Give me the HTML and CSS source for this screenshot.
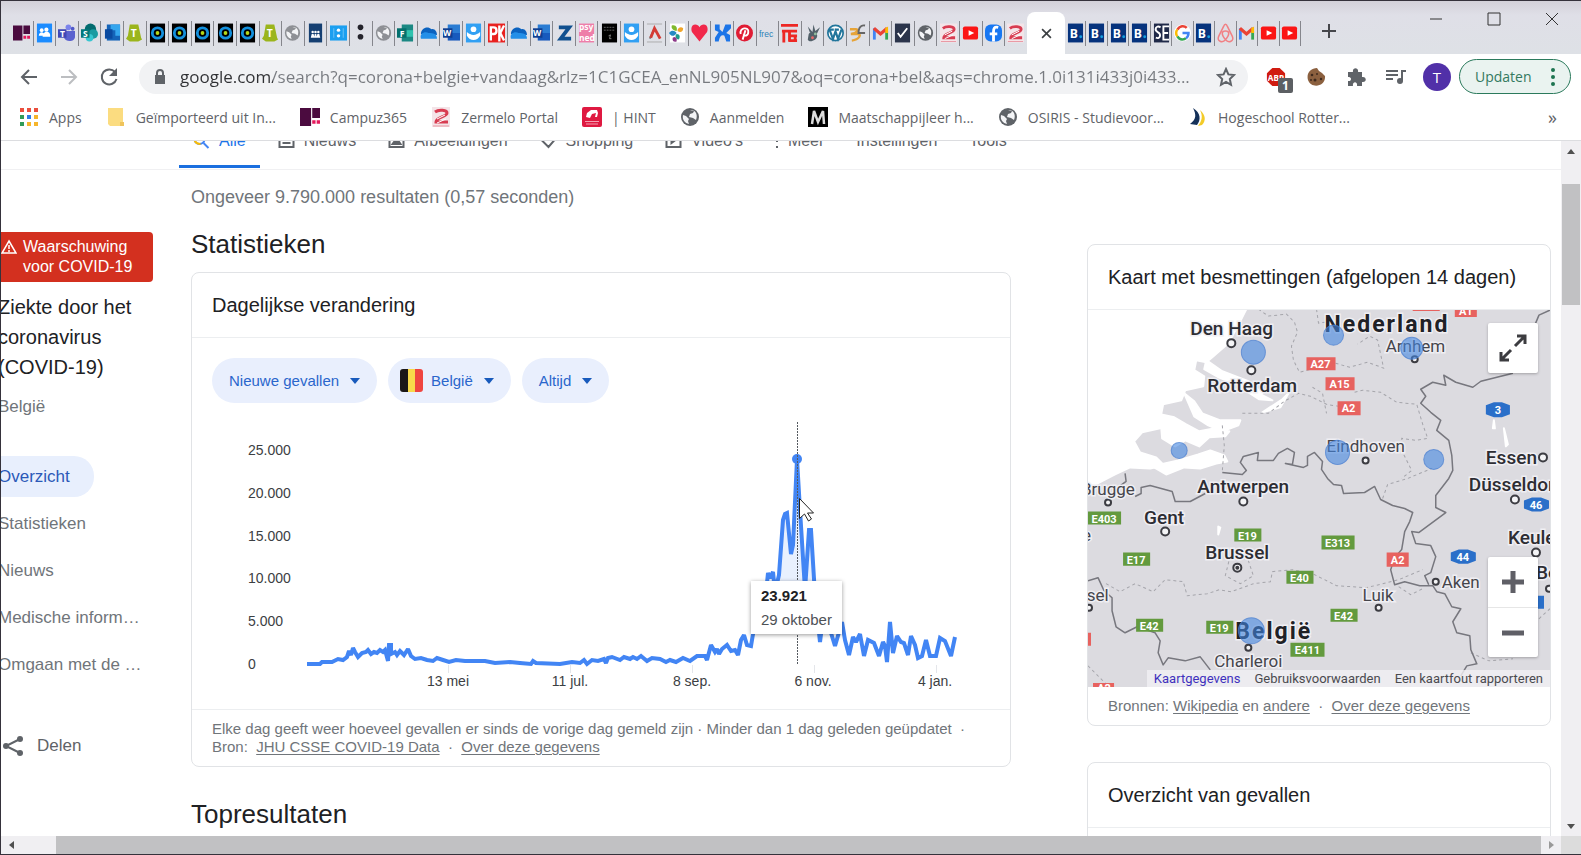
FILE: index.html
```html
<!DOCTYPE html>
<html lang="nl">
<head>
<meta charset="utf-8">
<title>corona belgie vandaag - Google Zoeken</title>
<link rel="stylesheet" href="styles.css">
</head>
<body>
<svg class="sprite" aria-hidden="true">
  <symbol id="campuz" viewBox="0 0 18 20"><path fill="#4b0b3f" d="M0 2h10v16H0zM11 2h7v9h-7z"/><path fill="#e5185c" d="M11 13h3v3h-3zM15 13h3v3h-3z"/></symbol>
  <symbol id="people" viewBox="0 0 18 20"><path fill="#1b8cff" d="M1 0h16v20H1z"/><g fill="#fff"><circle cx="6" cy="7" r="2"/><circle cx="11" cy="6.500" r="2.200"/><path d="M3 13c0-5 6-5 6 0zM7 14c0-7 9-7 8 0z"/></g></symbol>
  <symbol id="teams" viewBox="0 0 18 20"><circle cx="11" cy="4" r="3" fill="#7b83eb"/><circle cx="15.500" cy="5.500" r="2" fill="#5059c9"/><path fill="#5b62cf" d="M6 8h12v6c0 6-11 6-12 0z"/><path fill="#4048b5" d="M0 6h9v9H0z"/><text x="2" y="14" class="glyph g9">T</text></symbol>
  <symbol id="sharep" viewBox="0 0 18 20"><circle cx="10" cy="6" r="6" fill="#036c70"/><circle cx="13" cy="11" r="5" fill="#1a9ba1"/><circle cx="9" cy="15" r="4" fill="#37c6d0"/><path fill="#03787c" d="M0 6h9v9H0z"/><text x="2" y="14" class="glyph g9">S</text></symbol>
  <symbol id="cal" viewBox="0 0 18 20"><path fill="#1564b8" d="M3 1h14v17H3z"/><path fill="#35a6ee" d="M7 1h10v6H7zM12 7h5v6h-5z"/><path fill="#0a4aa0" d="M1 6h8v10H1z"/></symbol>
  <symbol id="tgreen" viewBox="0 0 18 20"><path fill="#9bb51c" d="M4 1h9l3 14 1 2-4 2H4l-4-3 2-3z"/><text x="5" y="14" class="glyph g11">T</text></symbol>
  <symbol id="ring" viewBox="0 0 18 20"><path d="M1 0h16v20H1z"/><circle cx="9" cy="10" r="5.500" fill="none" stroke="#1390dd" stroke-width="3"/><circle cx="9" cy="10" r="2" fill="#b4d819"/></symbol>
  <symbol id="globe" viewBox="0 0 20 20"><circle cx="10" cy="10" r="9" fill="currentColor"/><path fill="#f3f4f6" d="M3 8l3 1 3 3-1 2 1 3C5 16 2 13 3 8zM10 3l4 1-1 2-3 1-1 3 4 1 3 2c2-5 0-9-4-10z"/></symbol>
  <symbol id="navy" viewBox="0 0 18 20"><path fill="#153f72" d="M2 0h14v20H2z"/><g fill="#fff"><circle cx="6" cy="9" r="1.300"/><circle cx="9" cy="9" r="1.300"/><circle cx="12" cy="9" r="1.300"/><path d="M4 15l1-4h2l1 4zM7.500 15l.7-4h1.600l.7 4zM10 15l1-4h2l1 4z"/></g></symbol>
  <symbol id="cyan" viewBox="0 0 18 20"><path fill="#1b9ff0" d="M0 2h18v16H0z"/><circle cx="9" cy="7" r="1.800" fill="#fff"/><circle cx="9" cy="13" r="1.800" fill="#fff"/><path stroke="#6cc5f8" d="M4 5v10M14 5v10"/></symbol>
  <symbol id="colon" viewBox="0 0 18 20"><circle cx="9" cy="4" r="3" fill="#24232b"/><circle cx="9" cy="14" r="3" fill="#24232b"/></symbol>
  <symbol id="forms" viewBox="0 0 18 20"><path fill="#1b8883" d="M5 1h12v18H5z"/><path fill="#30c2ae" d="M10 7h7v7h-7z"/><path fill="#04706c" d="M0 5h10v10H0z"/><text x="3" y="14" class="glyph g9">F</text></symbol>
  <symbol id="cloud" viewBox="0 0 18 20"><path fill="#0b62bf" d="M1 11c0-6 7-9 11-5 4-1 6 3 6 6z"/><path fill="#238fe8" d="M1 16c-2-6 5-8 8-6 5 0 9 1 9 6z"/></symbol>
  <symbol id="word" viewBox="0 0 18 20"><path fill="#2b7cd3" d="M5 1h13v9H5z"/><path fill="#185abd" d="M5 10h13v8H5z"/><path fill="#103f91" d="M0 5h10v10H0z"/><text x="0" y="13" class="glyph g9">W</text></symbol>
  <symbol id="person" viewBox="0 0 18 20"><path fill="#31a0f3" d="M1 0h16v20H1z"/><circle cx="9" cy="6" r="3" fill="#fff"/><path fill="#fff" d="M2 9c4 4 10 4 14 0v4c-3 6-11 6-14 0z"/></symbol>
  <symbol id="ph" viewBox="0 0 18 20"><path fill="#e9211f" d="M0 0h18v20H0z"/><path fill="none" stroke="#fff" stroke-width="2.500" d="M3 18V4h3c4 0 4 7 0 7H3M12 2v17M17 2l-4 8 4 8"/></symbol>
  <symbol id="zblue" viewBox="0 0 18 20"><path fill="none" stroke="#11508f" stroke-width="4" d="M3 4h11L5 16h11"/></symbol>
  <symbol id="psy" viewBox="0 0 18 20"><path fill="#ee7fa9" d="M1 0h16v20H1z"/><text x="1" y="7" class="glyph g9">psy</text><text x="1" y="18" class="glyph g9">ned</text></symbol>
  <symbol id="blackbox" viewBox="0 0 18 20"><path d="M1 0h16v20H1z"/><path stroke="#666" stroke-dasharray="2 1" d="M3 4h12M3 7h12"/><path fill="none" stroke="#888" d="M8 13l2-1-1 4h2"/></symbol>
  <symbol id="aicon" viewBox="0 0 18 20"><path stroke="#aaa" d="M1 .5h16M1 19.500h16"/><path fill="none" stroke="#777" stroke-width="2" d="M4 16l5-11"/><path fill="none" stroke="#d43b35" stroke-width="3" d="M5 15l4-10 6 11"/></symbol>
  <symbol id="petals" viewBox="0 0 18 20"><path fill="#fff" d="M1 0h16v20H1z"/><g><path fill="#80b92d" d="M3 2c5-1 6 3 5 6-4-1-6-3-5-6z"/><path fill="#268ac4" d="M0 10c3-4 7-2 8 0-2 4-6 4-8 0z"/><path fill="#f0a52b" d="M9 8c0-4 4-5 6-3 0 4-3 5-6 3z"/><path fill="#1f9c8b" d="M8 11c4 0 4 4 2 6-3-1-4-4-2-6z"/><path fill="#8d3989" d="M4 15c3-2 5 1 4 4-3 1-5-1-4-4z"/></g></symbol>
  <symbol id="heart" viewBox="0 0 18 20"><path fill="#f1284b" d="M9 19L1 9C-2 0 7-1 9 4c2-5 11-4 8 5z"/></symbol>
  <symbol id="xblue" viewBox="0 0 18 20"><path fill="#1c75e8" d="M1 1h5v5l3 3 3-8h6v4l-5 5 4 2v7h-4l-2-6c-4-2-5 2-6 6H1v-4l4-6-4-2z"/></symbol>
  <symbol id="pin" viewBox="0 0 18 20"><circle cx="9" cy="10" r="9" fill="#e01c34"/><path fill="none" stroke="#fff" stroke-width="2" d="M7 17l3-10M5 11c-2-7 9-8 8-2 0 4-4 5-5 2"/></symbol>
  <symbol id="frec" viewBox="0 0 18 20"><text x="0" y="14" font-family="Liberation Sans" font-size="9" fill="#2b82b8">frec</text></symbol>
  <symbol id="tred" viewBox="0 0 18 20"><path fill="none" stroke="#ed2824" stroke-width="3" d="M0 2h18M1 8h16M3 8v12M8 13h9M8 18h9M9 8v11M15 13v6"/></symbol>
  <symbol id="pine" viewBox="0 0 18 20"><path fill="#53616a" d="M5 11c3-4 9-3 9 2s-9 8-10 4zM4 3l5 6 1-8 2 7 5-4-4 8-7-3z"/><circle cx="9" cy="15" r="1.500" fill="#e8696a"/><circle cx="12" cy="11" r="1.500" fill="#91bb9d"/></symbol>
  <symbol id="wp" viewBox="0 0 20 20"><circle cx="10" cy="10" r="9" fill="#fff" stroke="#21759b" stroke-width="2"/><path fill="none" stroke="#21759b" stroke-width="2.500" d="M3 6l4 11 3-9 3 9 4-11M2 6h6M9 6h5"/></symbol>
  <symbol id="swirl" viewBox="0 0 18 20"><path fill="none" stroke="#e7a437" stroke-width="2.500" d="M1 6h6c4 0 2 4-5 5h7c5 0 2 6-6 7"/><path fill="none" stroke="#666" stroke-width="2" d="M17 2c-6-1-7 5-7 8h7"/></symbol>
  <symbol id="gmail" viewBox="0 0 18 20"><path fill="#4285f4" d="M1 5h3v12H1z"/><path fill="#34a853" d="M14 8h3v9h-3z"/><path fill="none" stroke="#ea4335" stroke-width="3.500" d="M2 5l7 6 7-6"/><path fill="#fbbc04" d="M14 5l3-2v7h-3z"/></symbol>
  <symbol id="check" viewBox="0 0 18 20"><path fill="#2b344b" d="M1 0h16v20H1z"/><path fill="none" stroke="#fff" stroke-width="2" d="M4 10l3 4 7-9"/></symbol>
  <symbol id="zermelo" viewBox="0 0 18 20"><path fill="#f4e4e8" d="M0 0h18v20H0z"/><path fill="none" stroke="#d83c51" stroke-width="3" d="M3 5c4-3 12-2 12 1 0 4-11 4-11 9h12"/><path stroke="#fff" d="M5 12l8-4M5 16l9-4"/><path stroke="#e995a0" d="M1 19h16"/></symbol>
  <symbol id="yt" viewBox="0 0 18 20"><rect x="1" y="3" width="16" height="14" rx="2" fill="#fb1515"/><path fill="#fff" d="M7 7l6 3-6 3z"/></symbol>
  <symbol id="fb" viewBox="0 0 18 20"><rect y="1" width="18" height="18" rx="6" fill="#1877f2"/><path fill="none" stroke="#fff" stroke-width="3" d="M14 4c-4-1-5 1-5 5v10M5 11h8"/></symbol>
  <symbol id="booking" viewBox="0 0 18 20"><path fill="#06337d" d="M1 0h16v20H1z"/><text x="3" y="15" class="glyph g13">B</text><circle cx="14.500" cy="14" r="1.500" fill="#159fe0"/></symbol>
  <symbol id="se" viewBox="0 0 18 20"><path fill="#202a49" d="M1 0h16v20H1z"/><path fill="none" stroke="#fff" stroke-width="2" d="M8 4c-5-3-7 3-3 5s3 8-2 6M10 3h7M11 2v16M11 10h5M10 17h7"/></symbol>
  <symbol id="google" viewBox="0 0 20 20"><circle cx="10" cy="10" r="10" fill="#fff"/><g fill="none" stroke-width="3"><path stroke="#ea4335" d="M4 6c3-5 8-5 11-2"/><path stroke="#fbbc05" d="M4 6c-2 2-2 6 0 8"/><path stroke="#34a853" d="M4 14c3 5 8 4 10 2"/><path stroke="#4285f4" d="M10 10h7c0 3-1 5-3 6"/></g></symbol>
  <symbol id="airbnb" viewBox="0 0 18 20"><path fill="none" stroke="#f18084" stroke-width="1.600" d="M9 17c-3 4-10 2-7-4L7 3c1-3 3-3 4 0l5 10c3 6-4 8-7 4-5-6-4-9 0-9s5 3 0 9z"/></symbol>
  <symbol id="caret" viewBox="0 0 10 6"><path fill="#185abc" d="M0 0h10L5 6z"/></symbol>
</svg>

<header class="chrome">
  <div class="strip">
    <div class="tabs" role="tablist">
      <button class="tab"><svg><use href="#campuz"/></svg></button><button class="tab"><svg><use href="#people"/></svg></button><button class="tab"><svg><use href="#teams"/></svg></button><button class="tab"><svg><use href="#sharep"/></svg></button><button class="tab"><svg><use href="#cal"/></svg></button><button class="tab"><svg><use href="#tgreen"/></svg></button><button class="tab"><svg><use href="#ring"/></svg></button><button class="tab"><svg><use href="#ring"/></svg></button><button class="tab"><svg><use href="#ring"/></svg></button><button class="tab"><svg><use href="#ring"/></svg></button><button class="tab"><svg><use href="#ring"/></svg></button><button class="tab"><svg><use href="#tgreen"/></svg></button><button class="tab light"><svg><use href="#globe"/></svg></button><button class="tab"><svg><use href="#navy"/></svg></button><button class="tab"><svg><use href="#cyan"/></svg></button><button class="tab"><svg><use href="#colon"/></svg></button><button class="tab light"><svg><use href="#globe"/></svg></button><button class="tab"><svg><use href="#forms"/></svg></button><button class="tab"><svg><use href="#cloud"/></svg></button><button class="tab"><svg><use href="#word"/></svg></button><button class="tab"><svg><use href="#person"/></svg></button><button class="tab"><svg><use href="#ph"/></svg></button><button class="tab"><svg><use href="#cloud"/></svg></button><button class="tab"><svg><use href="#word"/></svg></button><button class="tab"><svg><use href="#zblue"/></svg></button><button class="tab"><svg><use href="#psy"/></svg></button><button class="tab"><svg><use href="#blackbox"/></svg></button><button class="tab"><svg><use href="#person"/></svg></button><button class="tab"><svg><use href="#aicon"/></svg></button><button class="tab"><svg><use href="#petals"/></svg></button><button class="tab"><svg><use href="#heart"/></svg></button><button class="tab"><svg><use href="#xblue"/></svg></button><button class="tab"><svg><use href="#pin"/></svg></button><button class="tab"><svg><use href="#frec"/></svg></button><button class="tab"><svg><use href="#tred"/></svg></button><button class="tab"><svg><use href="#pine"/></svg></button><button class="tab"><svg><use href="#wp"/></svg></button><button class="tab"><svg><use href="#swirl"/></svg></button><button class="tab"><svg><use href="#gmail"/></svg></button><button class="tab"><svg><use href="#check"/></svg></button><button class="tab"><svg><use href="#globe"/></svg></button><button class="tab"><svg><use href="#zermelo"/></svg></button><button class="tab"><svg><use href="#yt"/></svg></button><button class="tab"><svg><use href="#fb"/></svg></button><button class="tab last"><svg><use href="#zermelo"/></svg></button>
    </div>
    <button class="active-tab" aria-label="Tabblad sluiten"><svg viewBox="0 0 10 10"><path d="M1 1l8 8M9 1l-8 8"/></svg></button>
    <div class="tabs tabs-after">
      <button class="tab"><svg><use href="#booking"/></svg></button><button class="tab"><svg><use href="#booking"/></svg></button><button class="tab"><svg><use href="#booking"/></svg></button><button class="tab"><svg><use href="#booking"/></svg></button><button class="tab"><svg><use href="#se"/></svg></button><button class="tab"><svg><use href="#google"/></svg></button><button class="tab"><svg><use href="#booking"/></svg></button><button class="tab"><svg><use href="#airbnb"/></svg></button><button class="tab"><svg><use href="#gmail"/></svg></button><button class="tab"><svg><use href="#yt"/></svg></button><button class="tab"><svg><use href="#yt"/></svg></button>
    </div>
    <button class="new-tab" aria-label="Nieuw tabblad"><svg viewBox="0 0 16 16"><path d="M8 1v14M1 8h14"/></svg></button>
    <div class="window-controls">
      <button aria-label="Minimaliseren"><svg viewBox="0 0 14 14"><path d="M1 7h12"/></svg></button>
      <button aria-label="Maximaliseren"><svg viewBox="0 0 14 14"><path d="M1 1h12v12H1z"/></svg></button>
      <button aria-label="Sluiten"><svg viewBox="0 0 14 14"><path d="M1 1l12 12M13 1L1 13"/></svg></button>
    </div>
  </div>

  <div class="toolbar">
    <div class="nav-buttons">
      <button aria-label="Terug"><svg viewBox="0 0 20 20"><path d="M18 10H3M10 3l-7 7 7 7"/></svg></button>
      <button class="off" aria-label="Vooruit"><svg viewBox="0 0 20 20"><path d="M2 10h15M10 3l7 7-7 7"/></svg></button>
      <button aria-label="Vernieuwen"><svg viewBox="0 0 20 20"><path d="M16 5a7.500 7.500 0 1 0 1.500 7"/><path fill="currentColor" stroke="none" d="M18 1v8h-8z"/></svg></button>
    </div>
    <div class="omnibox">
      <svg class="lock" viewBox="0 0 12 16"><path fill="#5f6368" d="M1 6h10v9H1z"/><path fill="none" stroke="#5f6368" stroke-width="2" d="M3 7V4c0-4 6-4 6 0v3"/></svg>
      <input class="url" aria-label="Adres" value="google.com/search?q=corona+belgie+vandaag&amp;rlz=1C1GCEA_enNL905NL907&amp;oq=corona+bel&amp;aqs=chrome.1.0i131i433j0i433...">
      <button aria-label="Bladwijzer"><svg class="star" viewBox="0 0 20 20"><path d="M10 2l2.400 5.400 5.600.6-4.200 4 1.200 5.800-5-3-5 3 1.200-5.800L2 8l5.600-.6z"/></svg></button>
    </div>
    <div class="extensions">
      <button class="abp" aria-label="Adblock Plus"><svg viewBox="0 0 22 22"><path fill="#d01b10" d="M7 1h8l6 6v8l-6 6H7l-6-6V7z"/><text x="2" y="15" class="glyph g9">ABP</text></svg><span class="count">1</span></button>
      <button aria-label="Cookies"><svg viewBox="0 0 20 20"><path fill="#8b603f" d="M11 1l2 3 3 2 3 3c1 11-14 13-17 4C0 6 5 1 11 1z"/><g fill="#3f2a1e"><circle cx="6" cy="8" r="1.300"/><circle cx="11" cy="7" r="1"/><circle cx="9" cy="13" r="1.500"/><circle cx="15" cy="12" r="1.200"/><circle cx="5" cy="13" r="1"/></g></svg></button>
      <button aria-label="Extensies"><svg viewBox="0 0 20 20"><path fill="#5f6368" d="M2 5h5c-1-5 6-5 5 0h4v5c5-1 5 6 0 5v4h-5c1-5-5-5-4 0H2v-5c4 1 4-5 0-4z"/></svg></button>
      <button aria-label="Media"><svg viewBox="0 0 20 20"><path fill="none" stroke="#5f6368" stroke-width="2" d="M0 4h12M0 8h12M0 12h7M16 14V4h4"/><circle cx="14" cy="14" r="3" fill="#5f6368"/></svg></button>
      <button class="avatar">T</button>
      <button class="update">Updaten<svg viewBox="0 0 4 18"><circle cx="2" cy="2" r="2"/><circle cx="2" cy="9" r="2"/><circle cx="2" cy="16" r="2"/></svg></button>
    </div>
  </div>

  <nav class="bookmarks">
    <a href="#"><svg viewBox="0 0 20 20"><path fill="#ea4e3d" d="M1 1h4v4H1zM8 1h4v4H8zM15 1h4v4h-4z"/><path fill="#309b58" d="M1 8h4v4H1zM1 15h4v4H1z"/><path fill="#2c7be5" d="M8 8h4v4H8z"/><path fill="#f6b52b" d="M15 8h4v4h-4zM8 15h4v4H8zM15 15h4v4h-4z"/></svg>Apps</a>
    <a href="#"><svg viewBox="0 0 20 20"><path fill="#fbdc80" d="M2 1h15v14l1 1v3H4l-2-2z"/><path fill="#efc45c" d="M14 15h4v4h-4z"/></svg>Geïmporteerd uit In...</a>
    <a href="#"><svg viewBox="0 1 18 18"><use href="#campuz" width="18" height="20"/></svg>Campuz365</a>
    <a href="#"><svg viewBox="0 0 18 20"><use href="#zermelo" width="18" height="20"/></svg>Zermelo Portal</a>
    <a href="#"><svg viewBox="0 0 20 20"><rect width="20" height="20" rx="2" fill="#df1941"/><path fill="#fff" d="M4 10l1-4 4-3h6l1 3-1 4h-2l1-4-4 1-2 4z"/><path stroke="#f4a0b1" d="M3 14.500h14M4 17h12"/></svg>| HINT</a>
    <a href="#"><svg viewBox="0 0 20 20"><use href="#globe" width="20" height="20"/></svg>Aanmelden</a>
    <a href="#"><svg viewBox="0 0 20 20"><path d="M0 0h20v20H0z"/><path fill="none" stroke="#ddd" stroke-width="2.500" d="M4 17L6 4l4 11 5-11 1 13"/></svg>Maatschappijleer h...</a>
    <a href="#"><svg viewBox="0 0 20 20"><use href="#globe" width="20" height="20"/></svg>OSIRIS - Studievoor...</a>
    <a href="#"><svg viewBox="0 0 20 20"><path fill="#153159" d="M5 1c8 5 8 12 4 17l-7-1C9 12 8 7 5 1z"/><path fill="#f3cb28" d="M12 3c6 5 6 11 2 15l-4 1c4-5 5-10 2-16z"/></svg>Hogeschool Rotter...</a>
    <button class="more" aria-label="Meer bladwijzers">»</button>
  </nav>
</header>

<div class="viewport">
  <div class="page">
    <nav class="result-nav">
      <a href="#" class="current"><svg viewBox="0 0 16 16"><circle cx="6" cy="6" r="5" stroke="#4285f4"/><path stroke="#fbbc04" d="M1 7c1 3 3 4 6 4"/><path stroke="#4285f4" d="M10 10l5 5"/></svg>Alle</a>
      <a href="#"><svg viewBox="0 0 16 16"><path d="M1 2h14v12H1zM4 6h8M4 10h8"/></svg>Nieuws</a>
      <a href="#"><svg viewBox="0 0 16 16"><path d="M1 1h14v13H1z"/><path fill="currentColor" d="M4 11l3-4 2 2 1-1 2 3z"/></svg>Afbeeldingen</a>
      <a href="#"><svg viewBox="0 0 16 16"><path d="M8 1h6v6l-6 7-7-7z"/></svg>Shopping</a>
      <a href="#"><svg viewBox="0 0 16 16"><path d="M1 1h14v13H1z"/><path fill="currentColor" d="M6 5l4 2-4 3z"/></svg>Video's</a>
      <a href="#" class="more-results"><svg viewBox="0 0 4 16"><path stroke-dasharray="2 4" d="M2 1v14"/></svg>Meer</a>
      <a href="#">Instellingen</a>
      <a href="#">Tools</a>
    </nav>

    <div class="columns">
      <aside class="sidebar">
        <div class="warning"><svg viewBox="0 0 16 16"><path fill="none" stroke="#fff" stroke-width="1.500" d="M8 2l7 12H1zM8 6v4M8 11v2"/></svg><span>Waarschuwing voor COVID-19</span></div>
        <h1>Ziekte door het coronavirus (COVID-19)</h1>
        <p class="region">België</p>
        <nav class="topics">
          <a href="#" class="selected">Overzicht</a>
          <a href="#">Statistieken</a>
          <a href="#">Nieuws</a>
          <a href="#">Medische inform…</a>
          <a href="#">Omgaan met de …</a>
        </nav>
        <button class="share"><svg viewBox="0 0 20 20"><path fill="none" stroke="currentColor" stroke-width="2" d="M17 3L3 10l14 7"/><g fill="currentColor"><circle cx="17" cy="3" r="3"/><circle cx="3" cy="10" r="3"/><circle cx="17" cy="17" r="3"/></g></svg>Delen</button>
      </aside>

      <main class="main">
        <p class="stats">Ongeveer 9.790.000 resultaten (0,57 seconden)</p>
        <h2>Statistieken</h2>
        <section class="card">
          <h3>Dagelijkse verandering</h3>
          <div class="chips">
            <button class="chip">Nieuwe gevallen<svg><use href="#caret"/></svg></button>
            <button class="chip chip-flag"><span class="flag"></span>België<svg><use href="#caret"/></svg></button>
            <button class="chip">Altijd<svg><use href="#caret"/></svg></button>
          </div>
          <svg class="chart" viewBox="192 410 818 299" role="img" aria-label="Nieuwe gevallen per dag in België">
            <g class="axis">
              <text x="248" y="455">25.000</text><text x="248" y="498">20.000</text><text x="248" y="541">15.000</text><text x="248" y="583">10.000</text><text x="248" y="626">5.000</text><text x="248" y="669">0</text>
              <g text-anchor="middle"><text x="448" y="686">13 mei</text><text x="570" y="686">11 jul.</text><text x="692" y="686">8 sep.</text><text x="813" y="686">6 nov.</text><text x="935" y="686">4 jan.</text></g>
              <path stroke="#e4e6ea" d="M448.500 665v8M570.500 665v8M692.500 665v8M814.500 665v8M936.500 665v8"/>
            </g>
            <path class="area" d="M765 620V583L768 573 770 578 773 572 775 590 779 575 783 520 787 513 791 554 793 545 797 459 800 510 805 590 809 530 811 530 815 595V620z"/>
            <path class="line" d="M307 664H320L322 662H332L338 659 343 660 347 657 349 651 351 655 353 648 355 652 358 657 362 653 366 652 368 650 371 654 374 652 377 653 380 650 383 652 385 650 388 661 389 645 391 645 391 654 395 652 397 655 400 651 404 655 408 649 411 656 415 659 421 658 427 660 433 661 437 658 443 660 449 662 456 660 465 661 475 661 485 661 495 663 510 662 520 663 531 664 533 661 536 663 560 664 572 662 580 663 584 660 587 664 592 660 598 661 604 659 606 663 608 658 612 657 620 660 624 657 630 659 633 657 637 659 641 656 647 661 652 658 660 659 666 662 670 660 676 662 683 658 690 661 697 656 705 656 707 660 711 645 715 652 717 649 719 654 722 649 727 645 731 651 735 650 738 655 741 640 744 635 747 645 751 646 753 634 767 583 768 573 770 578 773 572 775 592 779 575 783 520 785 514 787 513 791 554 793 545 797 459 800 510 805 590 809 530 811 530 815 595 820 642 824 610 835 646 842 622 845 640 849 655 853 637 856 642 860 634 864 656 868 640 874 643 879 656 883 642 885 646 887 662 890 622 893 653 897 636 901 642 904 643 908 655 911 636 915 645 918 658 922 656 926 640 930 656 936 656 940 638 945 641 951 656 955 637"/>
            <circle cx="797" cy="459" r="5" fill="#4285f4"/>
            <path class="marker" d="M797.500 422V665"/>
            <rect class="tip-box" x="751" y="581" width="91" height="53"/>
            <text class="tip-value" x="761" y="601">23.921</text>
            <text class="tip-date" x="761" y="625">29 oktober</text>
            <path fill="#fff" stroke="#222" d="M799.500 498.500v20l5-4.500 4 7 3-2-4-6h6z"/>
          </svg>
          <p class="source">Elke dag geeft weer hoeveel gevallen er sinds de vorige dag gemeld zijn · Minder dan 1 dag geleden geüpdatet &nbsp;·<br>Bron: &nbsp;<a href="#">JHU CSSE COVID-19 Data</a> &nbsp;·&nbsp; <a href="#">Over deze gegevens</a></p>
        </section>
        <h2 class="top-results">Topresultaten</h2>
      </main>

      <aside class="right">
        <section class="card">
          <h3>Kaart met besmettingen (afgelopen 14 dagen)</h3>
          <div class="map">
            <svg class="map-canvas" viewBox="1088 309 461 378" preserveAspectRatio="xMidYMid slice" role="img" aria-label="Kaart van Nederland en België">
              <path fill="#dcdbe0" d="M1088 309h461v378h-461z"/>
              <g class="water">
                <path d="M1088 309H1246L1238 325 1228 343 1212 357 1206 362 1196 360 1194 370 1204 376 1203 386 1185 390 1181 400 1163 404 1161 414 1160 428 1142 432 1134 441 1140 452 1156 457 1164 465 1150 468 1130 467 1115 474 1088 488z"/>
                <path d="M1206 360l16 11 26 10 14 12-20-7-24-9-14-8zM1184 393l10 8 8 12 18 7 20 0-2 5-16 6-14-6-14-9zM1160 414l14 3 12 7 13 7 16-3 14 3-4 5-16 1-10 9-14-6-10 6-13-8zM1160 464l18-4 20-6 12-4 14 5 3 6-11 2-16 5-16-1-18 7-12-7z"/>
                <path d="M1240 387l14 4 18 9-13-1zM1262 412l20-13 6-6-8 14zM1218 526l2 1-2 7zM1493 420l1 8-2 0zM1503 428l4 16-2 2z"/>
              </g>
              <g class="dashed">
                <path d="M1258 309l10 7 18-2 8 8 3 10-6 14 2 14 6 12 12-3M1316 309l2 14 15-2M1335 363l14 4 18-5 16 6-6-28-8-4-12 8M1242 413l26 0 16-12 14-8 12 3 16 8 12 2 16 3M1312 387l10 6 4 20M1354 392l8-2 18 2 16 10 20 2 6 20 5 14-12 2-14-2 2 16 8 16-10 8M1222 425l2 20-2 26M1382 498l5-14 20-6 24-10M1106 583l14 8 15-8 18 8 12-12 18 2 4 14 20-2 12-4 12 2 22-8 17-2 2-10 20-2 20 4 24 12 30 2 32-8 24-10M1230 555l-5 20 15 8 13-8-6-18M1088 665l8 8 12 12M1470 652l18 8 24-2M1538 618l11-10M1398 586l12 8 12-6"/>
              </g>
              <g class="border">
                <path d="M1222 472l20 2 4-4-6-8 3-6 15-4-1 8 16 0 5-7 9-5 7 4-2 12-7-1 18 4 4-2 0-9 7-4 8 9-1 8 6 9 6 6 8 1 2 8 21-1 10-6 6 13 12 6 12 3 8 4-3 9-5 10-3 18-7 8-4 12 4 15 10-3 15 4 13 0 4 6 8 2 7 13 9 2-8 13 4 11 13 3 1 14 6 14-10 2-6 10"/>
                <path d="M1549 310l-11 5-5 12M1512 373l-32 8-8 6-17-5-12-7 2 10-13-3-12 7 5 7-5 7 10 9 10 8-4 10 12 10 3 15 1 15-4 8-13 17 0 12 10 5-27 20-7-1 4 12 15 2 5 11-5 16-6 3 4 9"/>
                <path d="M1088 580l10-3 6 13 8 7 0 13 4 16 9 6 12-6 18 6 5 8-2 12 5 12 5-7 17 3 15-4 10 13M1125 473l1 8-8 6M1135 496l6-3 0-6 9-2 22 6 3 10 15 0 15-8"/>
              </g>
              <g class="red"><path d="M1306 357h29v13h-29zM1325 377h29v13h-29zM1337 401h23v14h-23zM1454 305h22v12h-22zM1412 305h27v6h-27zM1386 552h22v14h-22zM1080 632h11v13h-11zM1093 682h21v10h-21z"/></g>
              <g class="green"><path d="M1088 511h33v13h-33zM1234 528h27v13h-27zM1123 552h27v13h-27zM1321 535h33v14h-33zM1286 570h27v13h-27zM1136 618h27v13h-27zM1206 620h27v13h-27zM1290 642h34v14h-34zM1330 608h27v13h-27z"/></g>
              <g fill="#2a6fc9"><path d="M1485 405l8-3h8l8 3v9l-8 3h-8l-8-3zM1450 552l8-3h9l8 3v8l-8 3h-9l-8-3zM1523 500l8-3h9l8 3v8l-8 3h-9l-8-3zM1523 597l8-2h12v13h-12z"/></g>
              <g class="badge"><text x="1320" y="368">A27</text><text x="1339" y="388">A15</text><text x="1348" y="412">A2</text><text x="1465" y="315">A1</text><text x="1397" y="563">A2</text><text x="1104" y="691">A2</text><text x="1104" y="522">E403</text><text x="1247" y="539">E19</text><text x="1136" y="563">E17</text><text x="1337" y="546">E313</text><text x="1299" y="581">E40</text><text x="1149" y="629">E42</text><text x="1219" y="631">E19</text><text x="1307" y="653">E411</text><text x="1343" y="619">E42</text><text x="1497" y="414">3</text><text x="1462" y="560">44</text><text x="1535" y="508">46</text></g>
              <g class="town"><circle cx="1231" cy="343" r="4"/><circle cx="1251" cy="370" r="4"/><circle cx="1414" cy="359" r="3"/><circle cx="1365" cy="460" r="3"/><circle cx="1542" cy="457" r="4"/><circle cx="1108" cy="502" r="3"/><circle cx="1243" cy="501" r="4"/><circle cx="1165" cy="531" r="4"/><circle cx="1237" cy="567" r="4"/><circle cx="1237" cy="567" r="1"/><circle cx="1248" cy="647" r="3"/><circle cx="1514" cy="499" r="4"/><circle cx="1535" cy="552" r="4"/><circle cx="1548" cy="588" r="3"/><circle cx="1378" cy="607" r="3"/><circle cx="1435" cy="581" r="3"/><circle cx="1089" cy="607" r="3"/></g>
              <g class="city"><text x="1190" y="335">Den Haag</text><text x="1207" y="392">Rotterdam</text><text x="1485" y="464">Essen</text><text x="1197" y="493">Antwerpen</text><text x="1144" y="523">Gent</text><text x="1205" y="558">Brussel</text><text x="1468" y="491">Düsseldorf</text><text x="1507" y="543">Keulen</text><text x="1535" y="578">Bonn</text></g>
              <g class="city small"><text x="1385" y="352">Arnhem</text><text x="1326" y="452">Eindhoven</text><text x="1081" y="495">Brugge</text><text x="1362" y="600">Luik</text><text x="1441" y="587">Aken</text><text x="1214" y="666">Charleroi</text><text x="1078" y="600">ssel</text><text x="1082" y="540">e</text></g>
              <g class="country"><text x="1324" y="332">Nederland</text><text x="1235" y="638">België</text></g>
              <g class="cases"><circle cx="1253" cy="352" r="12"/><circle cx="1333" cy="335" r="10"/><circle cx="1411" cy="348" r="11"/><circle cx="1179" cy="450" r="8"/><circle cx="1337" cy="452" r="12"/><circle cx="1433" cy="459" r="10"/><circle cx="1251" cy="630" r="13"/></g>
            </svg>
            <button class="map-full" aria-label="Volledig scherm"><svg viewBox="0 0 30 30"><path d="M17 13L27 3M19 3h8v8M13 17L3 27M3 19v8h8"/></svg></button>
            <div class="map-zoom">
              <button aria-label="Inzoomen"><svg viewBox="0 0 24 24"><path d="M12 1v22M1 12h22"/></svg></button>
              <button aria-label="Uitzoomen"><svg viewBox="0 0 24 24"><path d="M1 12h22"/></svg></button>
            </div>
            <div class="map-legal"><a href="#" class="data">Kaartgegevens</a><a href="#">Gebruiksvoorwaarden</a><a href="#">Een kaartfout rapporteren</a></div>
          </div>
          <p class="source">Bronnen: <a href="#">Wikipedia</a> en <a href="#">andere</a> &nbsp;·&nbsp; <a href="#">Over deze gegevens</a></p>
        </section>
        <section class="card card-next">
          <h3>Overzicht van gevallen</h3>
          <div class="card-body"></div>
        </section>
      </aside>
    </div>
  </div>

  <div class="vscroll"><button aria-label="Omhoog"><svg viewBox="0 0 8 5"><path d="M0 5h8L4 0z"/></svg></button><div class="vthumb"></div><button class="end" aria-label="Omlaag"><svg viewBox="0 0 8 5"><path d="M0 0h8L4 5z"/></svg></button></div>
  <div class="hscroll"><button aria-label="Links"><svg viewBox="0 0 5 8"><path d="M5 0v8L0 4z"/></svg></button><div class="hthumb"></div><button class="faint" aria-label="Rechts"><svg viewBox="0 0 5 8"><path d="M0 0v8l5-4z"/></svg></button></div>
  <div class="corner"></div>
</div>
</body>
</html>
```

FILE: styles.css
```css
* { box-sizing: border-box; }
body {
  margin: 0;
  height: 100vh;
  display: flex;
  flex-direction: column;
  overflow: hidden;
  border: solid #35323b;
  border-width: 1px 0 1px 1px;
  background: #fff;
  color: #202124;
  font-family: "Liberation Sans", Arial, sans-serif;
}
button { border: 0; padding: 0; background: none; font: inherit; color: inherit; }
a { color: inherit; text-decoration: none; }
h1, h2, h3, p { margin: 0; font-weight: 400; }
.sprite { display: none; }
.glyph { font-family: "Noto Sans", sans-serif; font-weight: 700; fill: #fff; }
.g9 { font-size: 9px; }
.g11 { font-size: 11px; }
.g13 { font-size: 13px; }

/* Browser frame */
.chrome { flex: none; font-family: "Open Sans", "Noto Sans", sans-serif; color: #5f6368; border-bottom: 1px solid #dcdde0; }
.strip { height: 53px; display: flex; align-items: flex-end; background: linear-gradient(#d3d1d9, #dfdfe7 14px, #dee1e6); }
.tabs { flex: 0 1 1016px; display: flex; height: 42px; align-items: center; margin-left: 10px; }
.tabs-after { flex-basis: 236px; margin-left: 0; }
.tab { flex: 1 1 0; min-width: 0; height: 25px; display: flex; align-items: center; justify-content: center; border-right: 1px solid #85868c; }
.tab.last { border-right: 0; }
.tab.light { color: #8e9095; }
.tab svg { width: 17px; height: 20px; flex: none; }
.active-tab { flex: 0 0 38px; height: 42px; background: #fff; border-radius: 8px 8px 0 0; }
.active-tab svg { width: 11px; height: 11px; stroke: #3c4043; stroke-width: 1.5; }
.new-tab { width: 56px; height: 42px; }
.new-tab svg { width: 16px; height: 16px; stroke: #45464b; stroke-width: 2; }
.window-controls { align-self: flex-start; margin-left: auto; display: flex; }
.window-controls button { width: 58px; height: 38px; }
.window-controls svg { width: 14px; height: 14px; fill: none; stroke: #333; }

.toolbar { height: 45px; display: flex; align-items: center; }
.nav-buttons { display: flex; padding-left: 18px; gap: 20px; margin-right: 20px; }
.nav-buttons button { width: 20px; height: 20px; }
.nav-buttons svg { width: 20px; height: 20px; display: block; fill: none; stroke: currentColor; stroke-width: 2; }
.nav-buttons .off { color: #bcbec1; }
.omnibox { flex: 1; height: 34px; display: flex; align-items: center; padding: 0 12px 0 15px; border-radius: 17px; background: #f1f2f4; }
.lock { width: 12px; height: 16px; margin-right: 14px; }
.url { flex: 1; min-width: 0; border: 0; padding: 0; outline: 0; background: linear-gradient(to right, #303134 93px, #777a7f 93px); -webkit-background-clip: text; background-clip: text; -webkit-text-fill-color: transparent; font: 17px/24px "Open Sans", "Noto Sans", sans-serif; }
.omnibox button { height: 20px; }
.star { width: 20px; height: 20px; fill: none; stroke: #5f6368; stroke-width: 2; }
.extensions { display: flex; align-items: center; gap: 20px; padding: 0 10px 0 18px; }
.extensions svg { width: 20px; height: 20px; display: block; }
.abp { position: relative; }
.count { position: absolute; left: 12px; top: 11px; width: 15px; height: 15px; border-radius: 2px; background: #5c5f63; color: #fff; font: 700 12px/15px "Open Sans", sans-serif; }
.avatar { width: 28px; height: 28px; margin-left: -3px; border-radius: 50%; background: #5130a8; color: #fff; font-size: 15px; }
.extensions .update { display: flex; align-items: center; justify-content: space-between; width: 112px; height: 35px; margin-left: -12px; padding: 0 15px; border: 1px solid #2b7a5c; border-radius: 18px; background: #eaf3f0; color: #33795f; font-size: 14px; }
.extensions .update svg { width: 4px; height: 18px; fill: #1d7450; }

.bookmarks { height: 41px; display: flex; align-items: center; gap: 24px; padding: 0 24px 5px 18px; font-size: 14px; white-space: nowrap; }
.bookmarks a { display: flex; align-items: center; gap: 10px; }
.bookmarks svg { width: 20px; height: 20px; flex: none; }
.more { margin-left: auto; font-size: 18px; }

/* Scrollable viewport */
.viewport { flex: 1; min-height: 0; display: grid; grid-template: minmax(0, 1fr) 18px / minmax(0, 1fr) 20px; }
.page { overflow: hidden; min-width: 0; }
.vscroll { display: flex; flex-direction: column; background: #f0eff2; }
.vscroll button { height: 20px; }
.vscroll .end { margin-top: auto; }
.vthumb { height: 121px; margin: 23px 1px 0; background: #c1c1c3; }
.hscroll { display: flex; background: #f0eff2; }
.hscroll button { width: 20px; }
.hthumb { flex: 1; margin-left: 35px; background: #c1c1c3; }
.vscroll svg { width: 8px; height: 5px; display: block; margin: auto; fill: #505050; }
.hscroll svg { width: 5px; height: 8px; display: block; margin: auto; fill: #505050; }
.hscroll .faint svg { fill: #999; }
.corner { background: #dcdcdc; }

.result-nav { display: flex; gap: 4px; height: 60px; margin-top: -31px; padding-left: 178px; border-bottom: 1px solid #f0f0f2; color: #5f6368; font-size: 16px; }
.result-nav a { display: flex; align-items: center; gap: 9px; height: 58px; padding: 7px 14px 0; border-bottom: 3px solid transparent; }
.result-nav .current { color: #1a73e8; border-color: #1a6fdf; }
.result-nav svg { width: 17px; height: 16px; fill: none; stroke: currentColor; stroke-width: 2; }
.result-nav .more-results svg { width: 4px; }

.columns { display: grid; grid-template-columns: 152px minmax(0, 858fr) minmax(0, 540fr); padding-right: 10px; }
.sidebar { padding-top: 62px; }
.warning { display: flex; align-items: flex-start; gap: 6px; padding: 5px 10px 5px 0; border-radius: 0 4px 4px 0; background: #d3301f; color: #fff; font-size: 16px; line-height: 20px; }
.warning svg { width: 16px; height: 16px; margin-top: 2px; flex: none; }
.sidebar h1 { margin: 10px 0 0 -3px; font-size: 20px; line-height: 30px; }
.region { margin: 13px 0 0 -3px; font-size: 17px; line-height: 24px; color: #70757a; }
.topics { display: grid; gap: 6px; margin: 37px 0 0 -3px; justify-items: start; font-size: 17px; line-height: 41px; color: #70757a; white-space: nowrap; }
.topics a { padding-right: 24px; border-radius: 0 20px 20px 0; }
.topics .selected { background: #e8effd; color: #2b59b8; }
.share { display: flex; align-items: center; gap: 14px; height: 24px; margin: 49px 0 0 2px; font-size: 17px; color: #5f6368; }
.share svg { width: 20px; height: 20px; }

.main { padding: 15px 0 0 38px; }
.stats { color: #70757a; font-size: 18px; line-height: 24px; }
.main h2 { margin-top: 20px; font-size: 26px; line-height: 30px; }
.main .top-results { margin-top: 32px; }
.main .card { margin-top: 13px; }
.card { border: 1px solid #e1e3e6; border-radius: 8px; overflow: hidden; background: #fff; }
.card h3 { padding: 0 20px; font-size: 20px; line-height: 64px; border-bottom: 1px solid #eceef0; white-space: nowrap; }
.chips { display: flex; gap: 11px; padding: 20px 20px 0; }
.chip { display: flex; align-items: center; gap: 11px; height: 45px; padding: 0 17px; border-radius: 23px; background: #e9effd; color: #2a66cc; font-size: 15px; }
.chip svg { width: 10px; height: 6px; }
.chip-flag { gap: 8px; padding-left: 12px; }
.chip-flag svg { margin-left: 3px; }
.flag { width: 23px; height: 23px; border-radius: 3px; background: linear-gradient(to right, #1b1718 33%, #f8d94a 33% 67%, #ef4540 67%); }
.chart { display: block; width: 100%; margin-top: 7px; }
.axis { font-size: 14px; fill: #3c4043; }
.area { fill: #e8f0fe; }
.line { fill: none; stroke: #4285f4; stroke-width: 4; stroke-linejoin: miter; stroke-miterlimit: 2; }
.marker { stroke: #555a60; stroke-dasharray: 2 1; }
.tip-box { fill: #fff; filter: drop-shadow(0 1px 2px #0006); }
.tip-value { font-size: 15px; font-weight: 700; fill: #202124; }
.tip-date { font-size: 15px; fill: #4d5156; }
.source { padding: 10px 20px; border-top: 1px solid #eceef0; font-size: 15px; line-height: 18px; color: #70757a; white-space: nowrap; }
.source a { text-decoration: underline; text-underline-offset: 2px; }

.right { padding: 74px 0 0 76px; }
.right .source { border-top: 0; }
.map { position: relative; height: 377px; background: #dcdbe0; }
.map-canvas { display: block; width: 100%; height: 100%; font-family: Roboto, sans-serif; }
.water path { fill: #fff; stroke: #fff; stroke-width: 2px; stroke-linejoin: round; }
.dashed path { fill: none; stroke: #a5a5ab; stroke-dasharray: 3 3; }
.border path { fill: none; stroke: #77777e; stroke-width: 1.5px; stroke-linejoin: round; }
.red { fill: #e7625f; }
.green { fill: #639a3e; }
.badge { fill: #fff; font-size: 11px; font-weight: 700; text-anchor: middle; }
.town { fill: #f4f4f6; stroke: #3c3c42; stroke-width: 2px; }
.city { font-size: 19px; font-weight: 500; fill: #2d2d33; paint-order: stroke; stroke: #f0eff3; stroke-width: 3px; }
.city.small { font-size: 17px; font-weight: 400; fill: #45454b; }
.country { font-size: 23px; font-weight: 700; letter-spacing: 2px; fill: #202126; paint-order: stroke; stroke: #f0eff3; stroke-width: 3px; }
.cases { fill: #4285e0; fill-opacity: .6; stroke: #4a7fd0; stroke-opacity: .7; }
.map-full, .map-zoom { position: absolute; right: 12px; width: 50px; background: #fff; border-radius: 2px; box-shadow: 0 1px 3px #0004; }
.map-full { top: 13px; height: 50px; }
.map-full svg { width: 30px; height: 30px; display: block; margin: auto; fill: none; stroke: #3c3c40; stroke-width: 3; }
.map-zoom { bottom: 30px; }
.map-zoom button { display: block; width: 50px; height: 50px; }
.map-zoom button + button { border-top: 1px solid #e6e6e6; }
.map-zoom svg { width: 24px; height: 24px; display: block; margin: auto; stroke: #5f5f66; stroke-width: 5; }
.map-legal { position: absolute; right: 0; bottom: 0; display: flex; background: #f1f0f4cc; color: #4a4a4f; font: 13px/17px Roboto, sans-serif; white-space: nowrap; }
.map-legal a { padding: 0 7px; }
.map-legal .data { color: #3f31bd; }
.card-next { margin-top: 36px; border-bottom-left-radius: 0; border-bottom-right-radius: 0; }
.card-body { height: 60px; }
```
